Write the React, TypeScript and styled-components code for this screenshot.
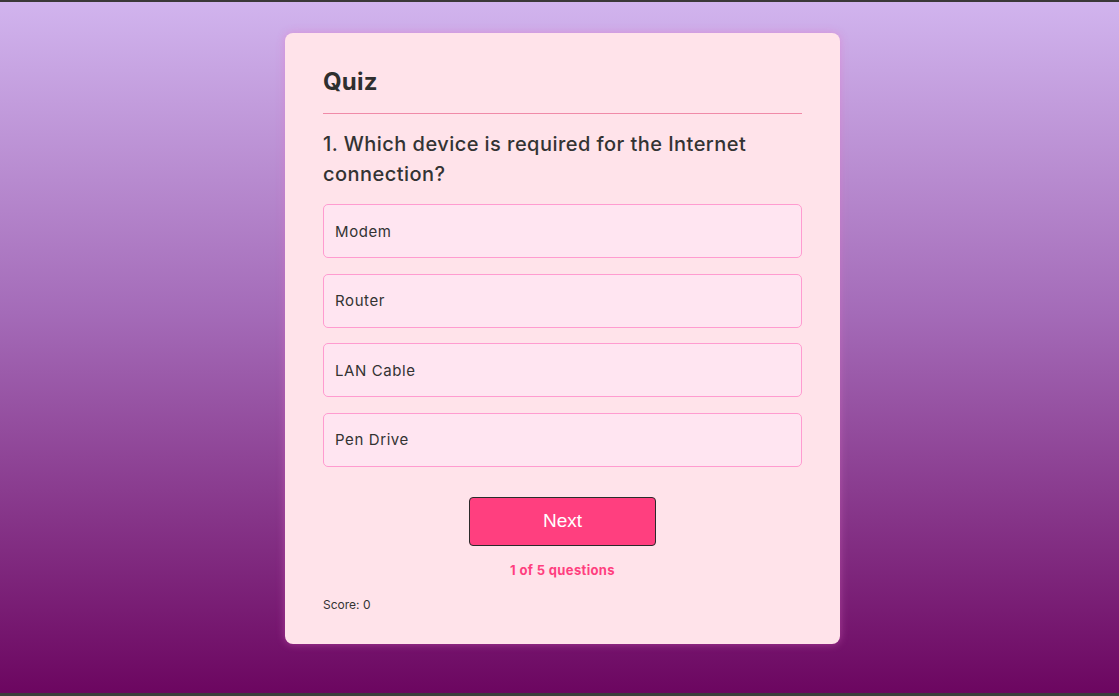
import React from "react";
import styled, { createGlobalStyle } from "styled-components";

const Global = createGlobalStyle`
  html, body { margin: 0; padding: 0; }
  body { font-family: "Inter", "Open Sans", sans-serif; }
  * { box-sizing: border-box; }
`;

const Page = styled.div`
  height: 696px;
  border-top: 2px solid #3a3838;
  border-bottom: 3px solid #3c3c3c;
  background: linear-gradient(180deg, #d1b4ee 0%, #a46bb8 45%, #6c0660 100%);
  padding-top: 31px;
  padding-left: 6px;
  display: flex;
  justify-content: center;
  align-items: flex-start;
`;

const Card = styled.div`
  width: 555px;
  background: #ffe3ea;
  border-radius: 8px;
  padding: 29px 38px 31px 38px;
  box-shadow: 0 0 8px rgba(230, 110, 200, 0.45);
  color: #333;
`;

const Title = styled.h1`
  margin: 0;
  font-size: 24px;
  font-weight: 700;
  line-height: 40px;
  padding-bottom: 11px;
  border-bottom: 1px solid #f08aa8;
  color: #2f2f2f;
  letter-spacing: 0.2px;
`;

const Question = styled.h2`
  margin: 15px 0 0;
  font-size: 20px;
  font-weight: 500;
  line-height: 30px;
  color: #333;
  letter-spacing: 0.45px;
`;

const Options = styled.div`
  display: flex;
  flex-direction: column;
  gap: 15.5px;
  margin-top: 15px;
`;

const Option = styled.button`
  height: 54px;
  width: 100%;
  text-align: left;
  padding: 0 11px;
  background: #ffe5f1;
  border: 1px solid #ff9bd0;
  border-radius: 5px;
  font-family: "Inter", "Open Sans", sans-serif;
  font-size: 15px;
  letter-spacing: 0.6px;
  color: #333;
  cursor: pointer;
`;

const Footer = styled.div`
  display: flex;
  flex-direction: column;
  align-items: center;
  margin-top: 30px;
`;

const NextButton = styled.button`
  width: 187px;
  height: 49px;
  background: #ff3f7f;
  border: 1px solid #2b2b2b;
  border-radius: 4px;
  color: #fff;
  font-family: "Liberation Sans", Arial, sans-serif;
  font-size: 19px;
  cursor: pointer;
`;

const Progress = styled.div`
  margin-top: 15px;
  font-size: 13px;
  font-weight: 700;
  color: #ff3f7f;
  line-height: 18px;
  letter-spacing: 0.35px;
`;

const Score = styled.div`
  margin-top: 18px;
  font-size: 12px;
  color: #333;
  line-height: 16px;
`;

export default function App() {
  const options = ["Modem", "Router", "LAN Cable", "Pen Drive"];
  return (
    <>
      <Global />
      <Page>
        <Card>
          <Title>Quiz</Title>
          <Question>1. Which device is required for the Internet connection?</Question>
          <Options>
            {options.map((o) => (
              <Option key={o}>{o}</Option>
            ))}
          </Options>
          <Footer>
            <NextButton>Next</NextButton>
            <Progress>1 of 5 questions</Progress>
          </Footer>
          <Score>Score: 0</Score>
        </Card>
      </Page>
    </>
  );
}
